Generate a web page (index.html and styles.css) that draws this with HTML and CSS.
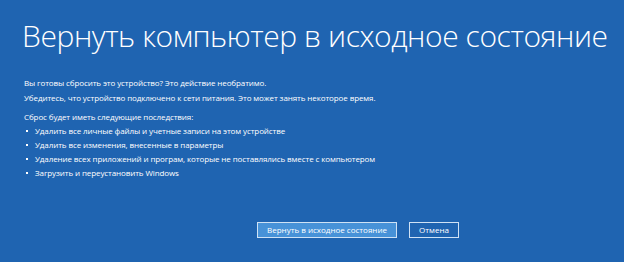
FILE: index.html
```html
<!DOCTYPE html>
<html lang="ru">
<head>
<meta charset="utf-8">
<link rel="stylesheet" href="styles.css">
</head>
<body>
<main class="screen">
  <h1 class="title">Вернуть компьютер в исходное состояние</h1>
  <div class="body">
    <p class="line">Вы готовы сбросить это устройство? Это действие необратимо.</p>
    <p class="line">Убедитесь, что устройство подключено к сети питания. Это может занять некоторое время.</p>
    <p class="line lead">Сброс будет иметь следующие последствия:</p>
    <ul class="list">
      <li>Удалить все личные файлы и учетные записи на этом устройстве</li>
      <li>Удалить все изменения, внесенные в параметры</li>
      <li>Удаление всех приложений и програм, которые не поставлялись вместе с компьютером</li>
      <li>Загрузить и переустановить Windows</li>
    </ul>
  </div>
  <div class="actions">
    <button class="btn primary">Вернуть в исходное состояние</button>
    <button class="btn">Отмена</button>
  </div>
</main>
</body>
</html>
```
FILE: styles.css
```css
* { box-sizing: border-box; }
html, body { margin: 0; padding: 0; }
body {
  width: 624px;
  height: 262px;
  background: #1f64b1;
  color: #ffffff;
  font-family: "Open Sans", "Noto Sans", sans-serif;
  overflow: hidden;
}
.screen {
  display: flex;
  flex-direction: column;
  padding: 18px 0 0 22px;
}
.title {
  margin: 0;
  font-weight: 300;
  font-size: 30px;
  line-height: 36px;
  letter-spacing: -0.42px;
  white-space: nowrap;
}
.body {
  margin-top: 21px;
  padding-left: 2px;
  font-size: 8px;
  line-height: 15px;
  letter-spacing: -0.1px;
}
.line { margin: 0; white-space: nowrap; }
.lead { margin-top: 5px; line-height: 14px; }
.list {
  margin: 0;
  padding: 0;
  list-style: none;
}
.list li {
  position: relative;
  padding-left: 11px;
  line-height: 14px;
  white-space: nowrap;
}
.list li::before {
  content: "";
  position: absolute;
  left: 2px;
  top: 6px;
  width: 2px;
  height: 2px;
  background: #ffffff;
}
.actions {
  display: flex;
  gap: 12px;
  margin-top: 42px;
  margin-left: 235px;
}
.btn {
  height: 16px;
  padding: 0 8px;
  border: 1.5px solid #cfe2f5;
  background: #1f64b1;
  color: #ffffff;
  font-family: "Open Sans", "Noto Sans", sans-serif;
  font-size: 8px;
  line-height: 12px;
}
.primary {
  width: 140px;
  background: #4792d8;
}
.btn:not(.primary) { width: 50px; }
```
